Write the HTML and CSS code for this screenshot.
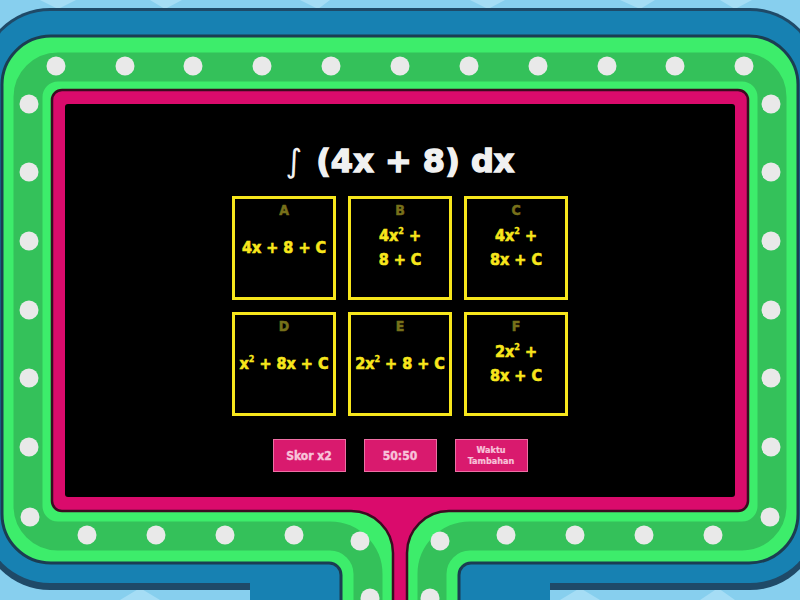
FILE: index.html
```html
<!DOCTYPE html>
<html lang="id">
<head>
<meta charset="utf-8">
<title>Kuis Integral</title>
<link rel="stylesheet" href="styles.css">
</head>
<body>
<main class="stage">
  <svg class="backdrop" viewBox="0 0 800 600" width="800" height="600" aria-hidden="true">
    <rect width="800" height="600" fill="#87cfee"/>
    <path d="M40 0 L58 9 L76 0 Z M150 0 L165 9 L182 0 Z M300 0 L318 9 L330 0 Z M470 0 L488 9 L505 0 Z M620 0 L640 9 L655 0 Z M720 0 L735 9 L752 0 Z M120 600 L140 588 L160 600 Z M560 600 L580 588 L600 600 Z M700 600 L718 588 L735 600 Z" fill="#a5ddf5"/>
    <rect x="-20" y="8" width="840" height="582" rx="70" fill="#1f4a68"/>
    <rect x="-17" y="11" width="834" height="572" rx="67" fill="#1781b2"/>
    <rect x="250" y="560" width="300" height="40" fill="#1781b2"/>
    <path d="M2 86 A49 49 0 0 1 51 36 H749 A49 49 0 0 1 798 86 V514 A49 49 0 0 1 749 563 H471 A12 12 0 0 0 459 575 V612 H341 V575 A12 12 0 0 0 329 563 H51 A49 49 0 0 1 2 514 Z" fill="#3ded6b" stroke="#1b3d52" stroke-width="3"/>
    <path d="M368 620 V574 A38 38 0 0 0 330 536 H58 A30 30 0 0 1 28 506 V97 A30 30 0 0 1 58 67 H742 A30 30 0 0 1 772 97 V506 A30 30 0 0 1 742 536 H470 A38 38 0 0 0 432 574 V620" fill="none" stroke="#34c15a" stroke-width="29"/>
    <path d="M62 90 H738 A10 10 0 0 1 748 100 V501 A10 10 0 0 1 738 511 H449 A42 42 0 0 0 407 553 V612 H393 V553 A42 42 0 0 0 351 511 H62 A10 10 0 0 1 52 501 V100 A10 10 0 0 1 62 90 Z" fill="#da0b6c" stroke="#3b0b20" stroke-width="2.5"/>
    <rect x="65" y="104" width="670" height="393" rx="3" fill="#000"/>
    <g fill="#e9e9e9">
      <circle cx="56" cy="66" r="9.5"/><circle cx="125" cy="66" r="9.5"/><circle cx="193" cy="66" r="9.5"/><circle cx="262" cy="66" r="9.5"/><circle cx="331" cy="66" r="9.5"/><circle cx="400" cy="66" r="9.5"/><circle cx="469" cy="66" r="9.5"/><circle cx="538" cy="66" r="9.5"/><circle cx="607" cy="66" r="9.5"/><circle cx="675" cy="66" r="9.5"/><circle cx="744" cy="66" r="9.5"/>
      <circle cx="29" cy="104" r="9.5"/><circle cx="29" cy="172" r="9.5"/><circle cx="29" cy="241" r="9.5"/><circle cx="29" cy="310" r="9.5"/><circle cx="29" cy="378" r="9.5"/><circle cx="29" cy="447" r="9.5"/><circle cx="30" cy="517" r="9.5"/>
      <circle cx="771" cy="104" r="9.5"/><circle cx="771" cy="172" r="9.5"/><circle cx="771" cy="241" r="9.5"/><circle cx="771" cy="310" r="9.5"/><circle cx="771" cy="378" r="9.5"/><circle cx="771" cy="447" r="9.5"/><circle cx="770" cy="517" r="9.5"/>
      <circle cx="87" cy="535" r="9.5"/><circle cx="156" cy="535" r="9.5"/><circle cx="225" cy="535" r="9.5"/><circle cx="294" cy="535" r="9.5"/><circle cx="360" cy="541" r="9.5"/><circle cx="370" cy="598" r="9.5"/>
      <circle cx="440" cy="541" r="9.5"/><circle cx="430" cy="598" r="9.5"/><circle cx="506" cy="535" r="9.5"/><circle cx="575" cy="535" r="9.5"/><circle cx="644" cy="535" r="9.5"/><circle cx="713" cy="535" r="9.5"/>
    </g>
  </svg>

  <section class="screen">
    <h1 class="question"><span class="integral">∫</span>(4x + 8) dx</h1>

    <div class="answers">
      <div class="answer"><span class="label">A</span><span class="value">4x + 8 + C</span></div>
      <div class="answer"><span class="label">B</span><span class="value">4x<sup>2</sup> +<br>8 + C</span></div>
      <div class="answer"><span class="label">C</span><span class="value">4x<sup>2</sup> +<br>8x + C</span></div>
      <div class="answer"><span class="label">D</span><span class="value">x<sup>2</sup> + 8x + C</span></div>
      <div class="answer"><span class="label">E</span><span class="value">2x<sup>2</sup> + 8 + C</span></div>
      <div class="answer"><span class="label">F</span><span class="value">2x<sup>2</sup> +<br>8x + C</span></div>
    </div>

    <div class="powerups">
      <button class="powerup">Skor x2</button>
      <button class="powerup">50:50</button>
      <button class="powerup small">Waktu<br>Tambahan</button>
    </div>
  </section>
</main>
</body>
</html>
```

FILE: styles.css
```css
html, body {
  margin: 0;
  padding: 0;
  background: #87cfee;
  overflow: hidden;
}

.stage {
  position: relative;
  width: 800px;
  height: 600px;
  box-sizing: border-box;
  padding: 104px 65px 0;
  font-family: "DejaVu Sans Condensed", "Liberation Sans Narrow", "DejaVu Sans", sans-serif;
}

.backdrop {
  position: absolute;
  left: 0;
  top: 0;
  display: block;
}

.screen {
  position: relative;
  height: 393px;
  display: flex;
  flex-direction: column;
  align-items: center;
}

.question {
  margin: 37px 0 0;
  font-family: "DejaVu Sans", sans-serif;
  font-weight: bold;
  font-size: 32px;
  line-height: 40px;
  color: #f1f1f1;
  white-space: nowrap;
  -webkit-text-stroke: 1.4px #f1f1f1;
}

.integral {
  font-weight: normal;
  margin-right: 14px;
  -webkit-text-stroke: 0;
}

.answers {
  display: grid;
  grid-template-columns: repeat(3, 104px);
  grid-auto-rows: 104px;
  gap: 12px;
  margin-top: 15px;
}

.answer {
  box-sizing: border-box;
  border: 3px solid #f7e61c;
  display: grid;
  grid-template-rows: 1fr auto 1fr;
  justify-items: center;
  text-align: center;
}

.label {
  align-self: start;
  padding-top: 4px;
  font-size: 14px;
  line-height: 14px;
  font-weight: bold;
  color: #77701a;
  -webkit-text-stroke: 0.5px #77701a;
}

.value {
  font-size: 16px;
  line-height: 24px;
  font-weight: bold;
  color: #f7e61c;
  white-space: nowrap;
  -webkit-text-stroke: 0.6px #f7e61c;
}

.value sup {
  font-size: 9px;
  line-height: 0;
  vertical-align: 7px;
  -webkit-text-stroke: 0.3px #f7e61c;
}

.powerups {
  display: flex;
  gap: 18px;
  margin-top: 23px;
}

.powerup {
  width: 73px;
  height: 33px;
  box-sizing: border-box;
  padding: 0;
  margin: 0;
  background: #d91a6e;
  border: 1px solid #ee6fa4;
  border-radius: 0;
  color: #f8c3da;
  font-family: inherit;
  font-weight: bold;
  font-size: 12px;
  line-height: 14px;
  text-align: center;
  -webkit-text-stroke: 0.4px #f8c3da;
}

.powerup.small {
  font-size: 9px;
  line-height: 11px;
  -webkit-text-stroke: 0.2px #f8c3da;
}
```
